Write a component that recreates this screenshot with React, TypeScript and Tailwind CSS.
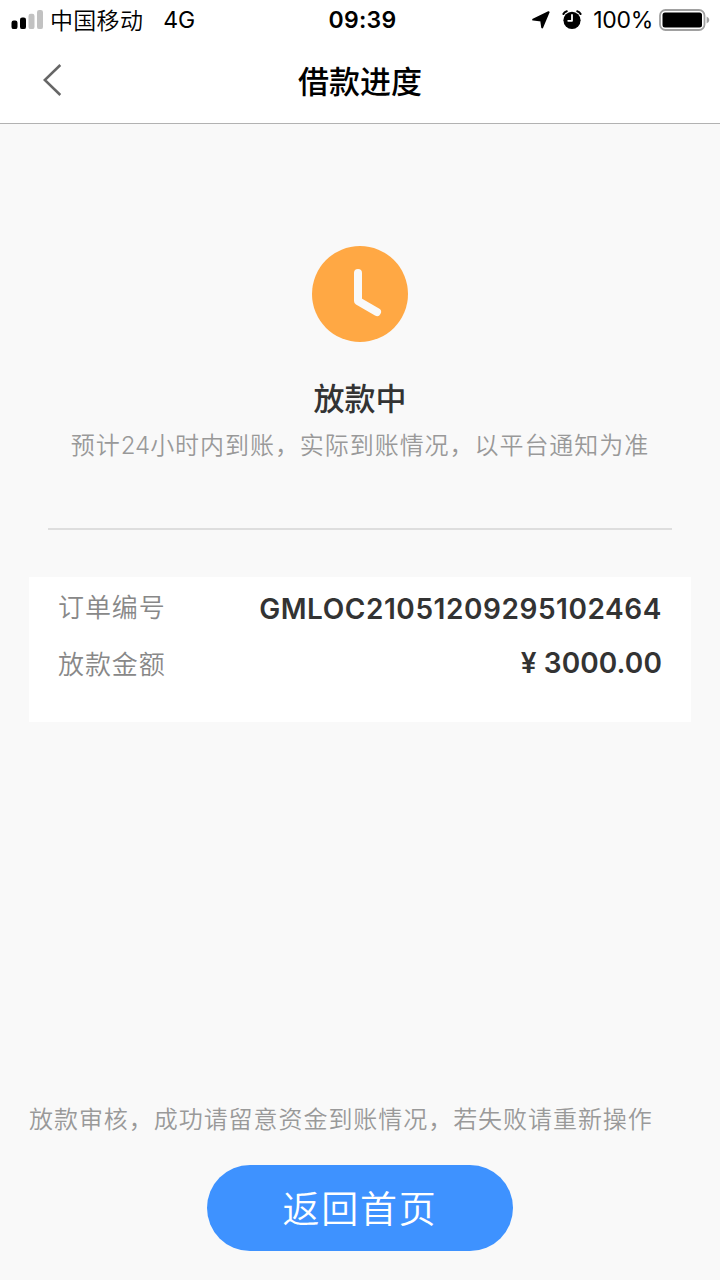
import React from 'react';

const SignalBars: React.FC = () => (
    <svg width="32" height="20" viewBox="0 0 32 20">
        <rect x="0.5" y="10.6" width="6" height="8.5" rx="2.2" fill="#000" />
        <rect x="9" y="7.4" width="6" height="11.7" rx="2.2" fill="#000" />
        <rect x="17.5" y="3.8" width="6" height="15.3" rx="2.2" fill="#c2c2c2" />
        <rect x="26" y="0" width="6" height="19.1" rx="2.2" fill="#c2c2c2" />
    </svg>
);

const LocationArrow: React.FC = () => (
    <svg width="18" height="18" viewBox="0 0 18 18">
        <path d="M16.6 1.2 L10.2 16.4 L9.2 9.4 L1.2 8.6 Z" fill="#000" stroke="#000" strokeWidth="2" strokeLinejoin="round" />
    </svg>
);

const AlarmClock: React.FC = () => (
    <svg width="20" height="20" viewBox="0 0 20 20">
        <circle cx="10" cy="10.3" r="8.6" fill="#000" />
        <path d="M1.4 4 Q2.4 1.8 4.8 1.2 M18.6 4 Q17.6 1.8 15.2 1.2" fill="none" stroke="#000" strokeWidth="2" strokeLinecap="round" />
        <path d="M10 5 V10.8 H6.2" fill="none" stroke="#fff" strokeWidth="1.8" strokeLinecap="round" strokeLinejoin="round" />
    </svg>
);

const Battery: React.FC = () => (
    <svg width="52" height="22" viewBox="0 0 52 22">
        <rect x="1" y="1" width="44.5" height="20" rx="5.5" fill="#fff" stroke="#a0a0a0" strokeWidth="1.8" />
        <rect x="3.5" y="3.5" width="39.5" height="15" rx="2.5" fill="#000" />
        <path d="M47.6 7.5 Q50.3 8.5 50.3 11 Q50.3 13.5 47.6 14.5 Z" fill="#a0a0a0" />
    </svg>
);

const StatusBar: React.FC = () => (
    <div className="grid h-10 grid-cols-3 items-center pl-[11px] pr-[9px] text-black">
        <div className="flex items-center">
            <SignalBars />
            <span className="ml-[7px] pt-0.5 text-[23px] font-[350] leading-[38px] tracking-[0.3px]">中国移动</span>
            <span className="ml-5 text-[23px] leading-10">4G</span>
        </div>
        <div className="pl-[3px] text-center text-[23px] font-semibold leading-10 tracking-[0.3px]">09:39</div>
        <div className="flex items-center justify-end">
            <LocationArrow />
            <span className="ml-3"><AlarmClock /></span>
            <span className="ml-[11px] text-[23px] leading-10 tracking-[-0.3px]">100%</span>
            <span className="ml-[6px]"><Battery /></span>
        </div>
    </div>
);

const Header: React.FC = () => (
    <header className="grid h-[84px] grid-cols-3 items-center border-b border-[#b2b2b2]">
        <button className="mb-[3px] ml-[42px] w-5" aria-label="返回">
            <svg width="20" height="32" viewBox="0 0 20 32">
                <path d="M18.3 1 L2.8 16 L18.3 31" fill="none" stroke="#666" strokeWidth="2.5" />
            </svg>
        </button>
        <h1 className="text-center text-[31px] font-medium leading-10 text-black">借款进度</h1>
    </header>
);

export default function App() {
    return (
        <div className="flex h-[1280px] w-[720px] flex-col overflow-hidden bg-[#f9f9f9] font-['Inter','Noto_Sans_CJK_SC',sans-serif]">
            <div className="bg-white">
                <StatusBar />
                <Header />
            </div>

            {/* Loan state */}
            <section className="flex flex-col items-center pt-[122px]">
                <svg width="96" height="96" viewBox="0 0 96 96">
                    <circle cx="48" cy="48" r="48" fill="#ffa844" />
                    <path d="M46 27 V55 L65 66" fill="none" stroke="#f9f9f9" strokeWidth="8" strokeLinecap="round" strokeLinejoin="round" />
                </svg>
                <h2 className="mt-[37px] text-[31px] font-medium leading-10 text-[#333]">放款中</h2>
                <p className="mt-[7px] whitespace-nowrap text-2xl font-[350] leading-[40px] tracking-[0.95px] text-[#999]">
                    预计<span className="tracking-normal">24</span>小时内到账，实际到账情况，以平台通知为准
                </p>
            </section>

            <div className="mx-12 mt-[62px] h-0.5 bg-[#dedede]"></div>

            {/* Order details */}
            <section className="mx-[29px] mt-[47px] flex h-[145px] justify-between bg-white px-[29px] pt-[2px]">
                <div className="flex flex-col text-[26px] font-[350] leading-[57px] tracking-[0.9px] text-[#888]">
                    <span>订单编号</span>
                    <span>放款金额</span>
                </div>
                <div className="flex flex-col items-end pt-[3px] text-[28px] font-semibold leading-[54px] text-[#333]">
                    <span className="tracking-[0.56px]">GMLOC21051209295102464</span>
                    <span className="tracking-[0.1px]">¥ 3000.00</span>
                </div>
            </section>

            <footer className="mt-auto flex flex-col items-center pb-[29px]">
                <p className="w-full whitespace-nowrap pl-[29px] text-2xl font-[350] leading-[40px] tracking-[0.95px] text-[#999]">
                    放款审核，成功请留意资金到账情况，若失败请重新操作
                </p>
                <button className="mt-[25px] h-[86px] w-[306px] rounded-full bg-[#3e92ff] pt-1 text-[37px] font-[350] tracking-[1.7px] text-white">
                    返回首页
                </button>
            </footer>
        </div>
    );
}
